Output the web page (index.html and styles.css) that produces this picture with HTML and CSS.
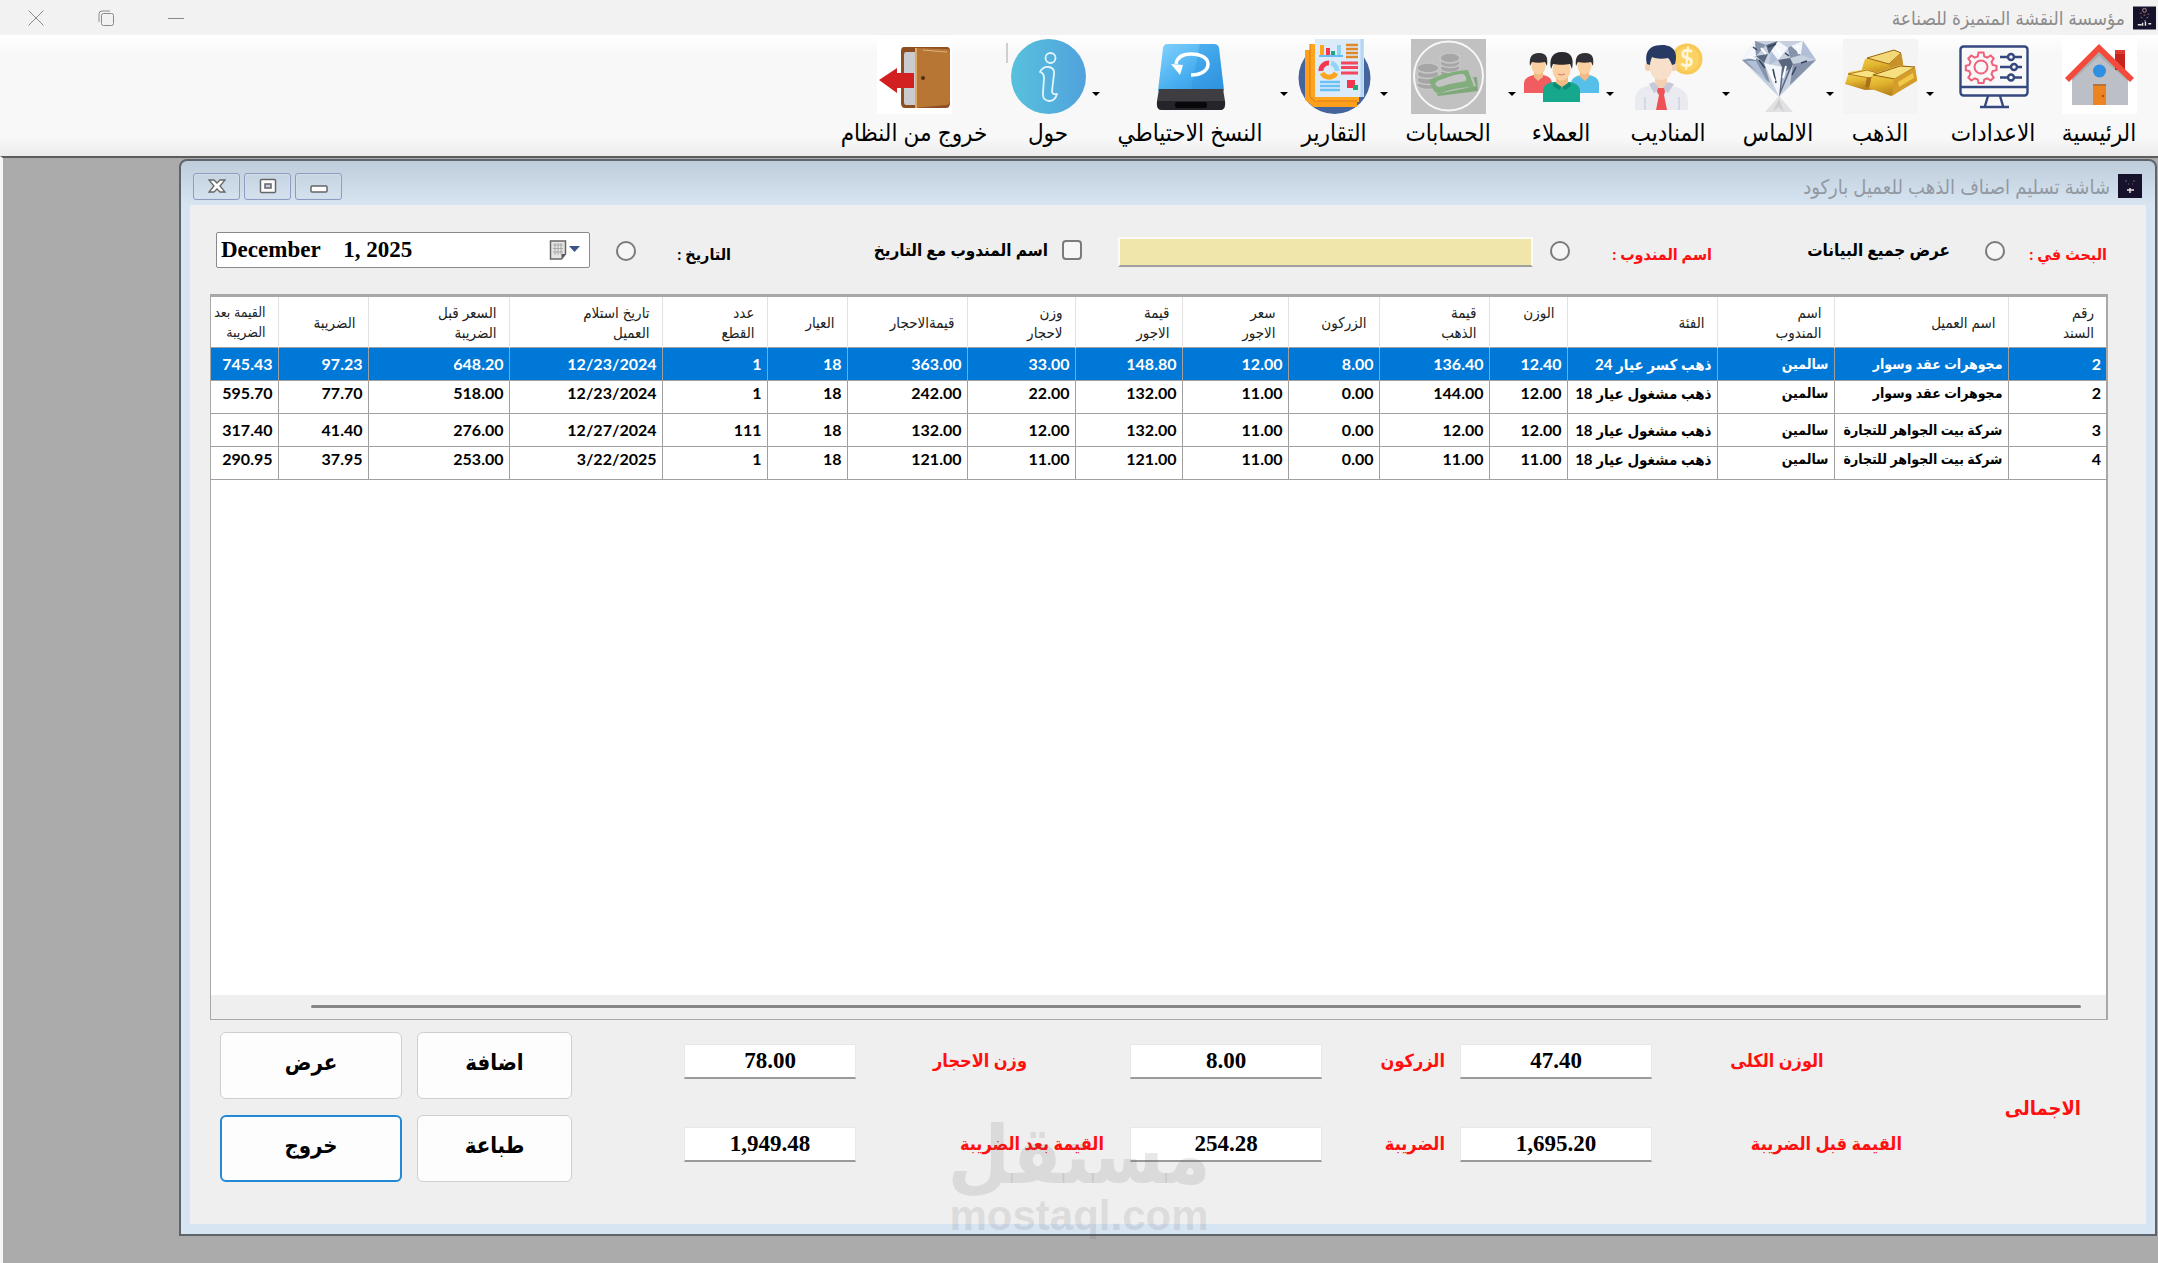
FILE: index.html
```html
<!DOCTYPE html>
<html lang="ar" dir="rtl">
<head>
<meta charset="utf-8">
<title>مؤسسة النقشة المتميزة للصناعة</title>
<link rel="stylesheet" href="styles.css">
</head>
<body>
<header class="titlebar">
  <svg class="app-icon" viewBox="0 0 24 24" aria-hidden="true"><rect width="24" height="24" fill="#17122b"/><circle cx="12" cy="4" r="2" fill="none" stroke="#b58f83"/><path d="M7 7h2M15 8h2M8 11l2 1M14 12l2-1M11 9h2" stroke="#8a6f74"/><path d="M5 19h4M10 17v3M13 16v4M16 18h3M12 15h1" stroke="#e8e0dc" stroke-width="1.5"/></svg>
  <h1 class="titlebar-text">مؤسسة النقشة المتميزة للصناعة</h1>
  <div class="titlebar-controls">
    <button class="sys-btn" aria-label="تصغير"><svg viewBox="0 0 16 16"><path d="M0 8.500h16"/></svg></button>
    <button class="sys-btn" aria-label="استعادة"><svg viewBox="0 0 16 16"><rect x="3.500" y="3.500" width="12" height="12" rx="2"/><path d="M1 12V4a3 3 0 0 1 3-3h8"/></svg></button>
    <button class="sys-btn" aria-label="إغلاق"><svg viewBox="0 0 16 16"><path d="M.5.5l15 15M15.500.5l-15 15"/></svg></button>
  </div>
</header>

<nav class="toolbar">
  <button class="tool">
    <svg viewBox="0 0 75 75"><rect width="75" height="75" fill="#fff"/><path d="M10 37L37 12l29 25v29H10z" fill="#bcbfc6"/><path d="M10 37L37 12l29 25v5L37 17 10 42z" fill="#a3b0b3"/><rect x="53" y="11" width="10" height="20" fill="#c8231d"/><rect x="53" y="11" width="10" height="4" fill="#dd3a30"/><path d="M3 39L37 5l35 34-4 4L37 13 7 43z" fill="#f34a3c"/><circle cx="37.500" cy="32" r="6.500" fill="#2f8fe0"/><rect x="31" y="45" width="13" height="21" fill="#ee8322"/><rect x="31" y="45" width="13" height="2" fill="#b4743a"/><circle cx="41" cy="57" r="1.300" fill="#a8540c"/></svg>
    <span>الرئيسية</span></button>
  <button class="tool">
    <svg viewBox="0 0 75 75"><g fill="none" stroke="#34487f" stroke-width="2.400"><rect x="4.500" y="7.500" width="67" height="49" rx="3"/><path d="M4 48h68M32 57l-3 10M44 57l3 10M24 68h29"/><path d="M44 18h22M44 28h22M44 38.500h22"/><circle cx="55" cy="18" r="3" fill="#f8f8f8"/><circle cx="58" cy="28" r="3" fill="#f8f8f8"/><circle cx="55" cy="38.500" r="3" fill="#f8f8f8"/></g><g fill="none" stroke="#f0617b" stroke-width="2"><path d="M22.500 13.500h5l.8 4 3 1.200 3.400-2.200 3 3-2.200 3.400 1.200 3 3.800.8v4.600l-3.800.8-1.200 3 2.200 3.400-3 3-3.400-2.200-3 1.200-.8 3.500h-5l-.8-3.500-3-1.200-3.400 2.200-3-3 2.200-3.400-1.200-3-3.500-.8v-4.600l3.500-.8 1.200-3-2.200-3.400 3-3 3.400 2.200 3-1.200z"/><circle cx="25" cy="28" r="6.500"/></g></svg>
    <span>الاعدادات</span></button>
  <button class="drop" aria-label="قائمة الذهب"></button>
  <button class="tool">
    <svg viewBox="0 0 75 75"><defs><linearGradient id="au" x2=".3" y2="1"><stop offset="0" stop-color="#f7dd63"/><stop offset=".6" stop-color="#e3b52f"/><stop offset="1" stop-color="#b8801a"/></linearGradient></defs><rect width="75" height="75" fill="#f4f4f4"/><path d="M22 20L51 11l8 4 1 14-14 9-28-5z" fill="url(#au)"/><path d="M24 19l27-8 7 3-12 11z" fill="#f3d877" stroke="#9b6415"/><path d="M46 25l12-11 3 16-14 7z" fill="#c8922a"/><path d="M2 45l4-12 18-3 15 5 3 15-20 1z" fill="url(#au)"/><path d="M5 35l19-4 14 4-12 4z" fill="#f9e380" stroke="#b17a1b"/><path d="M24 38l4 1-1 10-5-1z" fill="#a8721b"/><path d="M26 49l4-14 27-9 15 2 2 14-26 15z" fill="url(#au)"/><path d="M30 36l27-9 15 1-20 12z" fill="#f6df7f" stroke="#96600f"/><path d="M51 40l21-12 2 13-25 16z" fill="#d39c2c"/><path d="M55 43l15-9 1 5-15 9z" fill="#f0c948"/></svg>
    <span>الذهب</span></button>
  <button class="drop" aria-label="قائمة الالماس"></button>
  <button class="tool">
    <svg viewBox="0 0 75 75"><path d="M38 57l-14 16h28z" fill="#e1e1e3"/><path d="M38 60l-6 12 6-4 5 5z" fill="#cccdd1"/><path d="M14 2h48l13 19-37 37L1 21z" fill="#c7d0df"/><path d="M14 2L1 21l14-4zM25 6l12-4 10 7-10 12zM50 7l12-5-2 14zM23 24l15 34 3-30z" fill="#f3f7fb"/><path d="M14 2l11 4-10 11zM47 9l3-2 10 9-11 3zM1 21l14-2 8 5 6 20zM52 25l23-4-26 25z" fill="#8593ab"/><path d="M25 6l12-4-9 13zM15 17l12-2-4 9zM37 21l12-2 3 6-11 3zM41 28l11-3-14 33z" fill="#59677f"/><path d="M62 2l13 19-15-5zM5 22l10 0 12 22zM30 12l7 9-9 5zM42 34l6-4-8 20z" fill="#b1c0d8"/><path d="M12 8l4 3M32 30l3 14M55 28l-4 8M18 21l6 8M44 14l4 3M60 24l6-2M27 8l8-3" stroke="#35435c" stroke-width="1.500"/><path d="M20 9l5 6M36 8l4 8M56 7l2 8M28 32l6 10M45 27l-3 12M8 18l7 2" stroke="#fff" stroke-width="2"/></svg>
    <span>الالماس</span></button>
  <button class="drop" aria-label="قائمة المناديب"></button>
  <button class="tool">
    <svg viewBox="0 0 75 75"><circle cx="56" cy="20" r="15.500" fill="#f8ca55"/><circle cx="56" cy="20" r="12" fill="#fbd264"/><text x="56" y="28" class="coin-mark">$</text><path d="M4 71V61c0-9 7-13 13-14h24c9 1 16 7 16 15v9z" fill="#e9ebf1"/><path d="M14 71V58M48 71V58" stroke="#d5d9e3" stroke-width="2"/><path d="M24 36h12v12l-6 7-6-7z" fill="#f3d0b4"/><path d="M18 45l5-2 7 8 7-8 6 2-6 9-7-4-7 4z" fill="#c5cad8"/><path d="M27 49h6l1 4-1 3 3 15h-11l3-15-2-3z" fill="#ef5157"/><ellipse cx="17" cy="28" rx="3" ry="4" fill="#f3d0b4"/><ellipse cx="43" cy="28" rx="3" ry="4" fill="#f3d0b4"/><path d="M19 18h22v12c0 6-5 11-11 11s-11-5-11-11z" fill="#f8dfc9"/><path d="M16 25c-2-8-1-19 15-19 13 0 16 9 13 19l-3 1c-1-3-2-5-4-7-5 1-12 1-16-1-1 3-2 5-2 8z" fill="#273a64"/></svg>
    <span>المناديب</span></button>
  <button class="drop" aria-label="قائمة العملاء"></button>
  <button class="tool">
    <svg viewBox="0 0 75 75"><path d="M0 54V45c0-6 5-8 10-9h9c6 1 9 4 9 9v9z" fill="#f05c60"/><path d="M47 54V45c0-6 5-8 10-9h8c6 1 10 4 10 9v9z" fill="#55bfe9"/><path d="M10 32h9v6l-5 4-4-4zM56 32h9v6l-4 4-5-4z" fill="#f0b985"/><ellipse cx="14.500" cy="27" rx="7" ry="8.500" fill="#fbd0a0"/><ellipse cx="60.500" cy="27" rx="7" ry="8.500" fill="#fbd0a0"/><path d="M6 27c-1-8 1-13 9-13s9 5 8 13l-2-4c-4 1-9 1-13 0zM52 27c-1-8 1-13 9-13s9 5 8 13l-2-4c-4 1-9 1-13 0z" fill="#303036"/><path d="M19 63V52c0-5 4-8 10-9h17c6 1 10 4 10 9v11z" fill="#15a88c"/><path d="M32 36h12v8l-6 5-6-5z" fill="#f0b985"/><ellipse cx="37.500" cy="31" rx="9" ry="10.500" fill="#fbd0a0"/><path d="M27 30c-2-10 1-17 11-17s12 7 10 17l-2-5c-5 1-12 1-17 0z" fill="#29292e"/><path d="M30 43l8 5 8-5 1 4-6 4-3-3-3 3-6-4z" fill="#0b8b73"/><path d="M34 35q3 2 7 0" fill="none" stroke="#de716f"/></svg>
    <span>العملاء</span></button>
  <button class="drop" aria-label="قائمة الحسابات"></button>
  <button class="tool">
    <svg viewBox="0 0 75 75"><rect width="75" height="75" fill="#c1c1c1"/><circle cx="37.500" cy="37" r="34.500" fill="none" stroke="#f7f7f7" stroke-width="2"/><g fill="#a6a6a6" stroke="#c6c6c6" stroke-width="1.500"><ellipse cx="39" cy="34" rx="10" ry="4.500"/><ellipse cx="39" cy="29" rx="10" ry="4.500"/><ellipse cx="39" cy="24" rx="10" ry="4.500"/><ellipse cx="39" cy="19" rx="10" ry="5"/><ellipse cx="17" cy="46" rx="11" ry="4.500"/><ellipse cx="17" cy="41" rx="11" ry="4.500"/><ellipse cx="17" cy="35" rx="11" ry="4.500"/><ellipse cx="17" cy="29" rx="11" ry="5"/></g><path d="M26 55l39-8-3-9 4 0 1 14-40 5z" fill="#7fa97b"/><path d="M18 41q12-6 20-7 10-3 19-3l6 17q-18 0-36 7-5-2-9-14z" fill="#82ad7d"/><path d="M24 45q2-4 8-5 12-5 20-5 4 2 3 7-14 2-26 6-4 0-5-3z" fill="#c3c3c3"/></svg>
    <span>الحسابات</span></button>
  <button class="drop" aria-label="قائمة التقارير"></button>
  <button class="tool">
    <svg viewBox="0 0 75 75"><circle cx="37.500" cy="39" r="36" fill="#43649c"/><path d="M8 11h8v48l44 3v6H17L8 61z" fill="#fd9f1b"/><path d="M13 5h8v52h41v6H19l-6-6z" fill="#ffa51f"/><path d="M13 5v53l6 5M60 62H20" fill="none" stroke="#d77b12"/><rect x="18" y="0" width="49" height="58" fill="#dcebfa"/><path d="M65 0v58" stroke="#b4d4f1" stroke-width="3"/><path d="M22 17h24" stroke="#67bdf2" stroke-width="2"/><path d="M25 16V6" stroke="#fda51e" stroke-width="4"/><path d="M31 16V9" stroke="#f5364e" stroke-width="4"/><path d="M36 16v-4" stroke="#27a37a" stroke-width="4"/><path d="M42 16V6" stroke="#92d2f5" stroke-width="4"/><path d="M49 6h12M49 10h12M49 14h12M49 18h12" stroke="#df8828" stroke-width="2.500"/><g fill="none" stroke-width="5"><path d="M24 32a7.500 7.500 0 0 1 8-8" stroke="#f5364e"/><path d="M34 24a8 8 0 0 1 6 8" stroke="#94d5f7"/><path d="M39 34a8 8 0 0 1-14 0" stroke="#fda51e"/></g><path d="M44 24h17M44 28.500h17M44 34h17" stroke="#f5465b" stroke-width="3"/><path d="M23 43h20M23 47h20M23 51h20" stroke="#68c1f2" stroke-width="2.500"/><rect x="50" y="41" width="8" height="8" fill="#f5364e"/><rect x="56" y="46" width="5" height="5" fill="#27a37a"/></svg>
    <span>التقارير</span></button>
  <button class="drop" aria-label="قائمة النسخ الاحتياطي"></button>
  <button class="tool">
    <svg viewBox="0 0 75 75"><defs><linearGradient id="hd" y2="1" x2="1"><stop offset="0" stop-color="#82d3fc"/><stop offset=".55" stop-color="#48aef0"/><stop offset="1" stop-color="#2f8fdc"/></linearGradient></defs><path d="M14 5h47q4 0 5 4l5 43H5l5-43q1-4 4-4z" fill="url(#hd)"/><path d="M47 5h14q4 0 5 4l5 42H38z" fill="#2b93dc" opacity=".35"/><path d="M6 50h64l2 12q1 9-5 9H9q-6 0-5-9z" fill="#3e3d42"/><path d="M4 62h68q1 9-5 9H9q-6 0-5-9z" fill="#25242a"/><rect x="22" y="63" width="32" height="6" rx="2" fill="#08080a"/><path d="M38 36c11 0 17-5 17-11S48 15 38 15c-9 0-14 4-15 10" fill="none" stroke="#fff" stroke-width="3.500"/><path d="M18 25l12 1-3 10z" fill="#fff"/></svg>
    <span>النسخ الاحتياطي</span></button>
  <button class="drop" aria-label="قائمة حول"></button>
  <button class="tool">
    <svg viewBox="0 0 75 75"><defs><linearGradient id="inf"><stop offset="0" stop-color="#58c1dd"/><stop offset="1" stop-color="#50a2dc"/></linearGradient></defs><circle cx="37.500" cy="37.500" r="37.500" fill="url(#inf)"/><g fill="none" stroke="#e3f5fb" stroke-width="1.800" stroke-linejoin="round"><circle cx="39.500" cy="19" r="5"/><path d="M29 33q3-6 9-5 6 1 5 7l-2 17q0 4 5 3-2 7-8 7-7-1-6-8l1-15q0-5-4-6z"/></g></svg>
    <span>حول</span></button>
  <span class="tool-sep"></span>
  <button class="tool">
    <svg viewBox="0 0 75 75"><rect width="75" height="75" fill="#fff"/><path d="M27 8h43q3 0 3 4v52q0 5-4 5H28q-4 0-4-5V12q0-4 3-4z" fill="#8d4e22"/><path d="M29 13h10v53H29q-2 0-2-3V16q0-3 2-3z" fill="#c9cbcf"/><path d="M38 9l32 1q3 0 3 4v47q0 5-4 5l-31 3z" fill="#b87634"/><path d="M39 9v60" stroke="#e0a96a" stroke-width="2"/><path d="M46 11l24 2" stroke="#e1b27c"/><circle cx="46" cy="39" r="2" fill="#5a2c0c"/><path d="M2 41l18-12v5h17v15H20v5z" fill="#d21f20"/></svg>
    <span>خروج من النظام</span></button>
</nav>

<main class="workspace">
  <section class="window">
    <header class="window-head">
      <svg class="window-icon" viewBox="0 0 24 24" aria-hidden="true"><rect width="24" height="24" fill="#17122b"/><path d="M7 7h2M15 7h2M10 10h1M14 10h1" stroke="#77626e"/><path d="M9 16h7M12 14v5" stroke="#e8e0dc" stroke-width="1.500"/></svg>
      <h2 class="window-title">شاشة تسليم اصناف الذهب للعميل باركود</h2>
      <div class="window-controls">
        <button class="win-btn" aria-label="تصغير"><svg viewBox="0 0 18 16"><rect x="1" y="8" width="16" height="6" rx="1" fill="#fff" stroke="#666" stroke-width="1.500"/></svg></button>
        <button class="win-btn" aria-label="تكبير"><svg viewBox="0 0 18 16"><rect x="1.500" y="1.500" width="15" height="13" rx="1" fill="#fff" stroke="#666" stroke-width="1.500"/><rect x="6" y="6" width="6" height="4" fill="#c6d2df" stroke="#666" stroke-width="1.500"/></svg></button>
        <button class="win-btn" aria-label="إغلاق"><svg viewBox="0 0 18 16"><path d="M1 2h5l3 3 3-3h5l-5 6 5 6h-5l-3-3-3 3H1l5-6z" fill="#fff" stroke="#666" stroke-width="1.300"/></svg></button>
      </div>
    </header>

    <div class="window-body">
      <form class="filters">
        <span class="filter-label red">البحث في :</span>
        <input type="radio" name="mode" id="mode-all"><label class="filter-text" for="mode-all">عرض جميع البيانات</label>
        <label class="filter-label red" for="mode-agent">اسم المندوب :</label>
        <input type="radio" name="mode" id="mode-agent"><input class="agent" type="text" aria-label="اسم المندوب">
        <input type="checkbox" id="with-date"><label class="filter-text" for="with-date">اسم المندوب مع التاريخ</label>
        <label class="filter-label" for="mode-date">التاريخ :</label>
        <input type="radio" name="mode" id="mode-date">
        <div class="date" dir="ltr">
          <input type="text" aria-label="التاريخ" value="December    1, 2025">
          <svg viewBox="0 0 32 20" aria-hidden="true"><path d="M1.500 1h15v13l-4 5h-11z" fill="#e4e4e4" stroke="#666" stroke-width="1.500"/><path d="M4 5h10M4 8.500h10M4 12h10M6 3v12M9 3v12M12 3v11" stroke="#a9a9a9"/><path d="M12.500 18v-4h4z" fill="#555"/><path d="M20 6h11l-5.500 6z" fill="#3c5488"/></svg>
        </div>
      </form>

      <div class="grid">
        <div class="grid-view">
        <table>
          <colgroup><col><col><col><col><col><col><col><col><col><col><col><col><col><col><col><col><col></colgroup>
          <thead><tr>
            <th>رقم<br>السند</th><th>اسم العميل</th><th>اسم<br>المندوب</th><th>الفئة</th><th class="top">الوزن</th><th>قيمة<br>الذهب</th><th>الزركون</th><th>سعر<br>الاجور</th><th>قيمة<br>الاجور</th><th>وزن<br>لاحجار</th><th>قيمةالاحجار</th><th>العيار</th><th>عدد<br>القطع</th><th>تاريخ استلام<br>العميل</th><th>السعر قبل<br>الضريبة</th><th>الضريبة</th><th>القيمة بعد<br>الضريبة</th>
          </tr></thead>
          <tbody>
            <tr class="selected"><td>2</td><td>مجوهرات عقد وسوار</td><td>سالمين</td><td>ذهب كسر عيار 24</td><td>12.40</td><td>136.40</td><td>8.00</td><td>12.00</td><td>148.80</td><td>33.00</td><td>363.00</td><td>18</td><td>1</td><td>12/23/2024</td><td>648.20</td><td>97.23</td><td>745.43</td></tr>
            <tr><td>2</td><td>مجوهرات عقد وسوار</td><td>سالمين</td><td>ذهب مشغول عيار 18</td><td>12.00</td><td>144.00</td><td>0.00</td><td>11.00</td><td>132.00</td><td>22.00</td><td>242.00</td><td>18</td><td>1</td><td>12/23/2024</td><td>518.00</td><td>77.70</td><td>595.70</td></tr>
            <tr><td>3</td><td>شركة بيت الجواهر للتجارة</td><td>سالمين</td><td>ذهب مشغول عيار 18</td><td>12.00</td><td>12.00</td><td>0.00</td><td>11.00</td><td>132.00</td><td>12.00</td><td>132.00</td><td>18</td><td>111</td><td>12/27/2024</td><td>276.00</td><td>41.40</td><td>317.40</td></tr>
            <tr><td>4</td><td>شركة بيت الجواهر للتجارة</td><td>سالمين</td><td>ذهب مشغول عيار 18</td><td>11.00</td><td>11.00</td><td>0.00</td><td>11.00</td><td>121.00</td><td>11.00</td><td>121.00</td><td>18</td><td>1</td><td>3/22/2025</td><td>253.00</td><td>37.95</td><td>290.95</td></tr>
          </tbody>
        </table>
        </div>
        <div class="scrollbar"><div class="thumb"></div></div>
      </div>

      <form class="totals">
        <span class="total-title">الاجمالى</span>
        <label class="mid" for="t-weight">الوزن الكلى</label><input id="t-weight" type="text" value="47.40">
        <label for="t-zircon">الزركون</label><input id="t-zircon" type="text" value="8.00">
        <label class="mid" for="t-stones">وزن الاحجار</label><input class="narrow" id="t-stones" type="text" value="78.00">
        <button type="button">اضافة</button><button type="button">عرض</button>
        <label for="t-before">القيمة قبل الضريبة</label><input id="t-before" type="text" value="1,695.20">
        <label for="t-tax">الضريبة</label><input id="t-tax" type="text" value="254.28">
        <label for="t-after">القيمة بعد الضريبة</label><input class="narrow" id="t-after" type="text" value="1,949.48">
        <button type="button">طباعة</button><button type="button" class="focused">خروج</button>
      </form>
    </div>
    <div class="watermark"><span class="wm-name">مستقل</span><span class="wm-site">mostaql.com</span></div>
  </section>
</main>
</body>
</html>
```

FILE: styles.css
```css
* { box-sizing: border-box; }

body {
  margin: 0;
  min-height: 100vh;
  display: flex;
  flex-direction: column;
  font-family: "Lato", "DejaVu Sans Condensed", "DejaVu Sans", sans-serif;
  color: #000;
  background: #fff;
}

button { font-family: inherit; color: inherit; padding: 0; border: 0; background: none; }
h1, h2 { margin: 0; font-weight: 400; }

/* Application title bar */
.titlebar {
  height: 35px;
  display: flex;
  align-items: center;
  padding: 0 2px 0 1px;
  background: #f2f2f2;
}
.app-icon { width: 23px; height: 24px; }
.titlebar-text { margin-right: 8px; font-size: 19px; line-height: 24px; color: #8c8c8c; white-space: nowrap; }
.titlebar-controls { display: flex; margin-right: auto; }
.sys-btn { width: 70px; height: 34px; display: grid; place-items: center; }
.sys-btn svg { width: 16px; height: 16px; fill: none; stroke: #8a8a8a; }

/* Toolbar */
.toolbar {
  height: 121px;
  padding: 4px 8px 0 0;
  display: grid;
  grid-template-columns: 102px 110px 16px 84px 16px 88px 16px 100px 16px 82px 16px 112px 16px 84px 16px 172px 16px 80px 4px 180px;
  background: linear-gradient(#fff, #f8f8f8 15%, #f8f8f8 85%, #ececec);
}
.tool { display: flex; flex-direction: column; align-items: center; font-size: 24px; line-height: 36px; white-space: nowrap; }
.tool svg { width: 75px; height: 75px; flex: none; }
.coin-mark { font: 700 24px "Lato", sans-serif; fill: #fff6dc; text-anchor: middle; }
.drop { align-self: start; height: 75px; padding-top: 34px; display: grid; place-items: center; }
.drop::before { content: ""; border: 4px solid transparent; border-top-color: #000; border-bottom: 0; }
.tool-sep { width: 2px; height: 20px; margin-top: 4px; background: #cfcfcf; }

/* Workspace and child window */
.workspace {
  flex: 1;
  display: flex;
  padding: 1px 1px 27px 177px;
  background: #ababab;
  border-left: 3px solid #f6f6f6;
  border-top: 2px solid #5c5c5c;
}
.window {
  position: relative;
  flex: 1;
  display: flex;
  flex-direction: column;
  padding: 0 9px 10px;
  border: 2px solid #5e646b;
  border-radius: 8px 8px 0 0;
  background: linear-gradient(#bfcddb, #d7e4f1 44px);
}
.window-head { height: 44px; display: flex; align-items: center; padding: 6px 4px 0 3px; }
.window-icon { width: 24px; height: 24px; }
.window-title { margin-right: 8px; font-size: 20px; line-height: 26px; color: #9299a2; white-space: nowrap; }
.window-controls { display: flex; gap: 4px; margin-right: auto; }
.win-btn {
  width: 47px;
  height: 27px;
  display: grid;
  place-items: center;
  border: 1px solid #8b9cc0;
  border-radius: 3px;
  box-shadow: inset 0 0 0 1px #d3deea;
}
.win-btn svg { width: 18px; height: 16px; }

.window-body { flex: 1; display: flex; flex-direction: column; padding: 27px 38px 42px 20px; background: #efefef; }

/* Search filters */
.filters {
  height: 62px;
  display: grid;
  grid-template-columns: 102fr 55fr 238fr 142fr 37fr 451fr 34fr 317fr 95fr 46fr 374fr;
  padding: 0 1px 0 6px;
  align-items: start;
  justify-items: start;
  line-height: 36px;
  font-weight: 700;
  white-space: nowrap;
}
.filter-label { font-size: 16px; padding-top: 4px; }
.filter-text { font-size: 17px; }
.red { color: #ff1010; }
.filters input[type="radio"],
.filters input[type="checkbox"] {
  appearance: none;
  width: 20px;
  height: 20px;
  margin: 9px 0 0;
  border: 2px solid #7b7b7b;
  border-radius: 50%;
  background: #f6f6f6;
}
.filters input[type="checkbox"] { border-radius: 4px; margin-top: 8px; }
.agent {
  width: 92%;
  height: 30px;
  margin-top: 5px;
  border: 2px solid #fafafa;
  border-bottom: 2px solid #a0a0a0;
  background: #f0e6a9;
}
.date {
  width: 100%;
  height: 36px;
  display: flex;
  align-items: center;
  padding: 0 8px 0 4px;
  border: 1px solid #8a8a8a;
  border-radius: 2px;
  background: #fff;
}
.date input {
  flex: 1;
  min-width: 0;
  padding: 0;
  border: 0;
  background: none;
  font: 700 23px "Liberation Serif", serif;
}
.date svg { width: 32px; height: 20px; }

/* Data grid */
.grid {
  flex: 1;
  display: flex;
  flex-direction: column;
  border: 1px solid #a8a8a8;
  border-top: 3px solid #a8a8a8;
  border-right-width: 2px;
  background: #fff;
}
.grid-view { flex: 1; overflow: hidden; }
table { width: 100%; table-layout: fixed; border-collapse: collapse; }
col:nth-child(1) { width: 98px; }
col:nth-child(2) { width: 174px; }
col:nth-child(3) { width: 117px; }
col:nth-child(4) { width: 150px; }
col:nth-child(5) { width: 78px; }
col:nth-child(6) { width: 110px; }
col:nth-child(7) { width: 91px; }
col:nth-child(8) { width: 106px; }
col:nth-child(9) { width: 107px; }
col:nth-child(10) { width: 108px; }
col:nth-child(11) { width: 120px; }
col:nth-child(12) { width: 80px; }
col:nth-child(13) { width: 105px; }
col:nth-child(14) { width: 153px; }
col:nth-child(15) { width: 141px; }
col:nth-child(16) { width: 90px; }
col:nth-child(17) { width: 67px; }
th, td { overflow: hidden; white-space: nowrap; text-align: right; border-left: 1px solid #a0a0a0; }
th:last-child, td:last-child { border-left: 0; }
th {
  height: 50px;
  padding: 0 12px 0 0;
  font-size: 15px;
  font-weight: 400;
  line-height: 20px;
  color: #222;
  border-left-color: #e2e2e2;
}
th:last-child { font-size: 14px; }
th.top { vertical-align: top; padding-top: 5px; }
td {
  height: 33px;
  padding: 0 5px 0 0;
  font-size: 16px;
  font-weight: 700;
  line-height: 24px;
  border-top: 1px solid #a0a0a0;
  border-bottom: 1px solid #a0a0a0;
}
tbody tr:nth-child(even) td { vertical-align: top; }
td:nth-child(2), td:nth-child(3) { font-size: 14px; }
td:nth-child(4) { font-size: 15px; }
.selected { background: #0078d7; color: #fff; }
.scrollbar { height: 24px; padding: 10px 25px 0 100px; background: #efefef; }
.thumb { height: 3px; background: #868686; border-radius: 2px; }

/* Totals and actions */
.totals {
  display: grid;
  grid-template-columns: 179fr 250fr 207fr 123fr 218fr 248fr 284fr 170fr 182fr;
  grid-template-rows: 67px 67px;
  row-gap: 16px;
  padding: 12px 27px 0 10px;
  font-size: 18px;
  font-weight: 700;
  white-space: nowrap;
}
.total-title { grid-row: span 2; align-self: center; font-size: 20px; color: #ff1010; }
.totals label { padding-top: 10px; line-height: 36px; color: #ff1010; }
.totals .mid { justify-self: center; }
.totals input {
  width: 192px;
  height: 35px;
  margin: 12px 0 0;
  padding: 0;
  border: 1px solid #e8e8e8;
  border-bottom: 2px solid #9a9a9a;
  background: #fff;
  font: 700 23px "Liberation Serif", serif;
  text-align: center;
}
.totals .narrow { width: 172px; }
.totals button {
  width: 155px;
  padding-bottom: 8px;
  font-size: 22px;
  font-weight: 700;
  border: 1px solid #cfcfcf;
  border-radius: 6px;
  background: #fdfdfd;
}
.totals button + button { width: auto; }
.totals .focused { border: 2px solid #2388d6; }

/* Watermark over the window */
.watermark {
  position: absolute;
  left: 767px;
  bottom: -6px;
  width: 262px;
  display: flex;
  flex-direction: column;
  align-items: center;
  color: rgba(90, 90, 90, .14);
  font-weight: 700;
  pointer-events: none;
}
.wm-name { font-size: 80px; line-height: 80px; }
.wm-site { font-family: "Liberation Sans", sans-serif; font-size: 42px; line-height: 48px; }
```
